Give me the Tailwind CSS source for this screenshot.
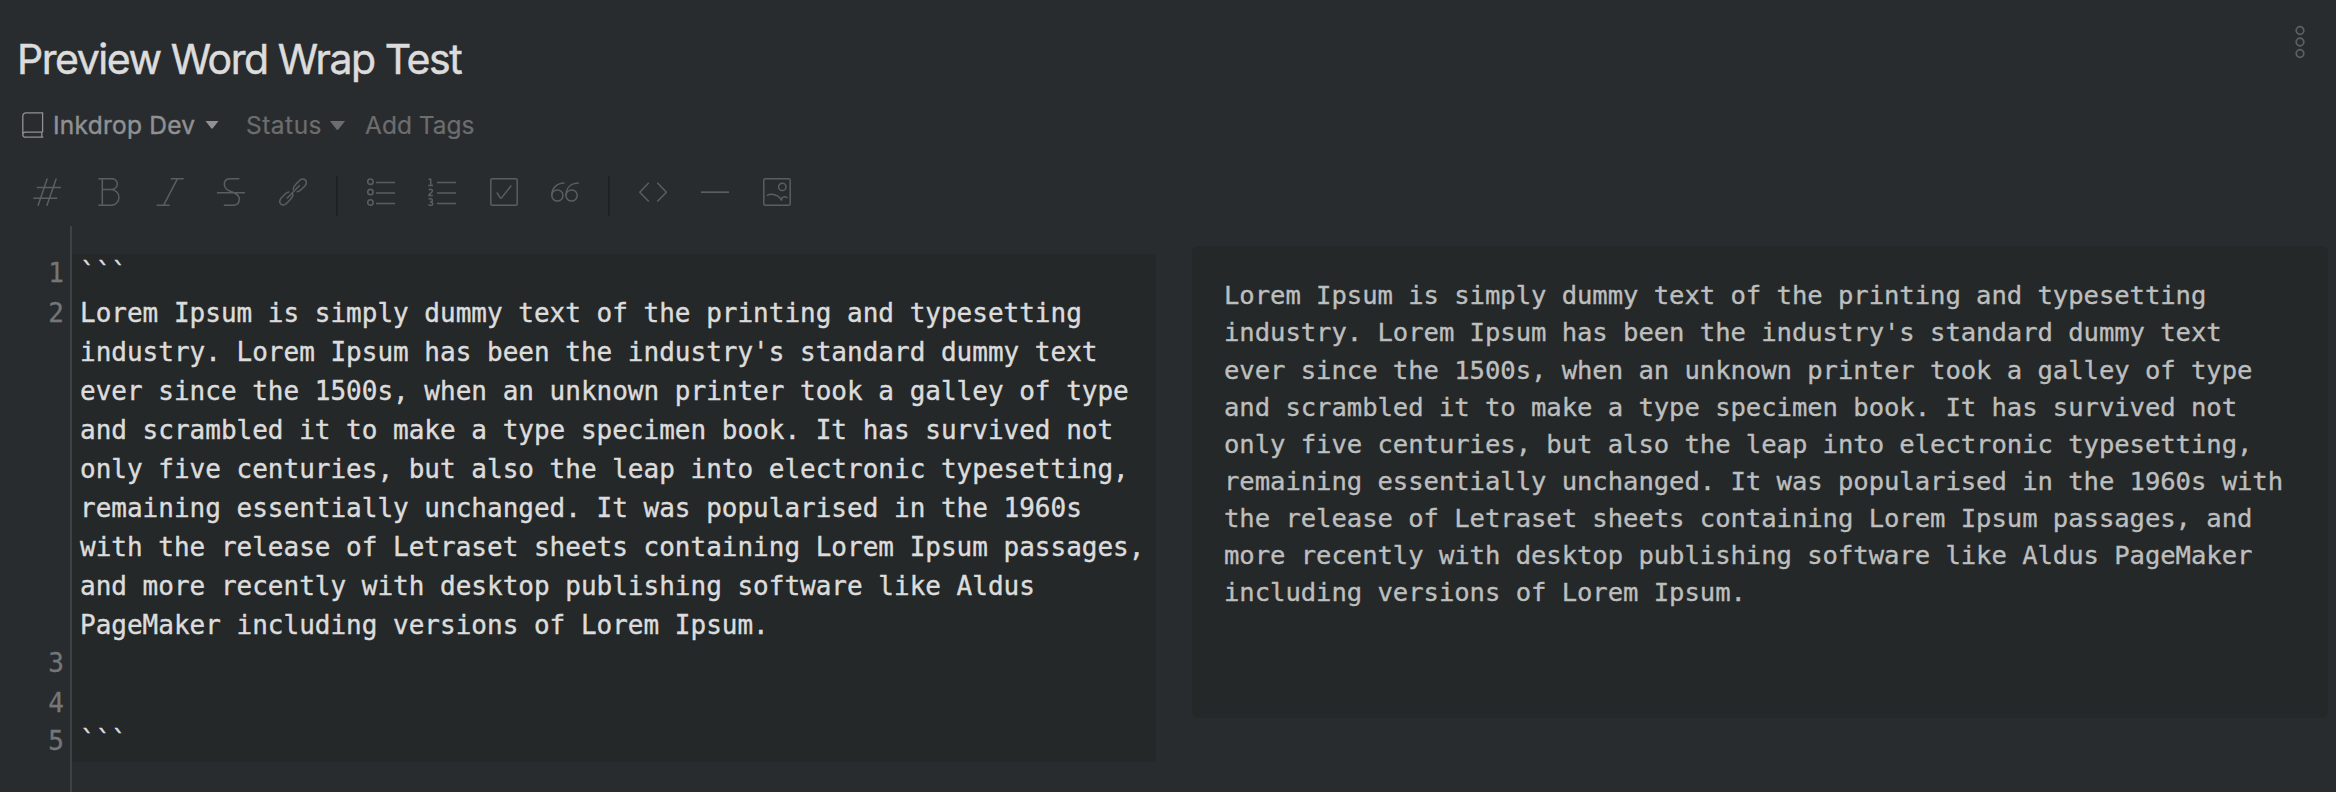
<!DOCTYPE html>
<html lang="en">
<head>
<meta charset="utf-8">
<title>Preview Word Wrap Test</title>
<script src="https://cdn.jsdelivr.net/npm/@tailwindcss/browser@4"></script>
</head>
<body class="flex h-[792px] w-[2336px] flex-col overflow-hidden bg-[#292c2f] font-['Inter',sans-serif]">
  <header class="flex h-[96px] shrink-0 justify-between">
    <h1 class="pt-[35px] pl-[17px] text-[41px] leading-[49px] font-normal tracking-[-1.44px] whitespace-nowrap text-[#dcdcdc] [-webkit-text-stroke:0.5px_#dcdcdc]">Preview Word Wrap Test</h1>
    <svg class="mt-[25px] mr-[31px] h-[34px] w-[10px] text-[#5d6062]" viewBox="0 0 10 34" fill="none" stroke="currentColor" stroke-width="1.7"><circle cx="5" cy="5.5" r="3.8"/><circle cx="5" cy="17" r="3.8"/><circle cx="5" cy="28.5" r="3.8"/></svg>
  </header>

  <div class="flex h-[60px] shrink-0 items-center pb-[2px] pl-[22px] text-[24.5px] leading-[30px] whitespace-nowrap text-[#6c6d6e]">
    <svg class="h-[26px] w-[22px] text-[#909192]" viewBox="0 0 22 26" fill="none" stroke="currentColor" stroke-width="1.3"><path d="M20.6 20.2V.8H4A3.2 3.2 0 0 0 .8 4v18.3M21.3 25.2H3.3a2.4 2.4 0 0 1 0-5H20.6M19.8 20.2v5"/></svg>
    <span class="ml-[9px] w-[142px] tracking-[0.25px] text-[#909192] [-webkit-text-stroke:0.4px_#909192]">Inkdrop Dev</span>
    <svg class="ml-[10px] h-[8px] w-[14px] text-[#909192]" viewBox="0 0 14 8"><path d="M.5 0h13L7.6 7.6h-1.2z" fill="currentColor"/></svg>
    <span class="ml-[27px] w-[76px] tracking-[0.5px] [-webkit-text-stroke:0.2px_#6c6d6e]">Status</span>
    <svg class="ml-[8px] h-[9px] w-[15px]" viewBox="0 0 15 9"><path d="M0 0h15L8.2 8.7H6.8z" fill="currentColor"/></svg>
    <span class="ml-[20px] [-webkit-text-stroke:0.2px_#6c6d6e]">Add Tags</span>
  </div>

  <nav class="flex h-[70px] shrink-0 items-start pt-[20px] pl-[33px] text-[#5b5e60]">
    <div class="flex gap-[33.4px] pt-[2px]">
      <svg class="size-[28px]" viewBox="0 0 28 28" fill="none" stroke="currentColor" stroke-width="1.5"><path d="M3.7 9.5H28M.3 20.3H24.3M14.3.5 5 27.8M23.3.5 13.8 27.8"/></svg>
      <svg class="size-[28px]" viewBox="0 0 28 28" fill="none" stroke="currentColor" stroke-width="1.5"><path d="M4.3.7H18a5.35 5.35 0 0 1 0 10.7H8.3M17 11.4a7.95 7.95 0 0 1 0 15.9H4.3M8.3.7V27.3"/></svg>
      <svg class="size-[28px]" viewBox="0 0 28 28" fill="none" stroke="currentColor" stroke-width="1.5"><path d="M14.7.7H27.7M.7 27.2H13.7M21.5.7 7.7 27.2"/></svg>
      <svg class="size-[28px]" viewBox="0 0 28 28" fill="none" stroke="currentColor" stroke-width="1.5"><path d="M0 14.8H28M22.3.7H13.5C9 .7 7.3 3.5 7.3 6.3C7.3 12.5 14 13 17.5 15C20.5 16.6 22.3 18.3 22.3 21C22.3 25 20 27.3 16 27.3H6.8"/></svg>
      <svg class="size-[28px]" viewBox="0 0 28 28" fill="none" stroke="currentColor" stroke-width="1.5" stroke-linecap="round"><path d="M8.3 20 20.3 7.8M14.3 11.5C14.2 9.8 14.8 8.6 16 7.2L20 3C22 .8 24.6.3 26.3 1.9C28 3.6 27.6 6.2 25.6 8.2L22 11.8C20.8 13 19.8 13.6 18.2 13.7M13.9 16.3C14 18.2 13.4 19.3 12.2 20.6L8 24.9C6 26.9 3.5 27.6 1.8 26C.1 24.4.5 21.8 2.5 19.7L6.2 16C7.3 14.9 8.3 14.2 9.9 14"/></svg>
    </div>
    <div class="ml-[29.4px] h-[40px] w-[2px] bg-[#1f2124]"></div>
    <div class="ml-[29px] flex gap-[33.4px] pt-[2px]">
      <svg class="size-[28px]" viewBox="0 0 28 28" fill="none" stroke="currentColor" stroke-width="1.5"><g stroke-width="1.6"><circle cx="3.4" cy="3.7" r="2.7"/><circle cx="3.4" cy="14.1" r="2.7"/><circle cx="3.4" cy="24.5" r="2.7"/></g><path d="M9 4.5H28M9 15H28M9 25.5H28"/></svg>
      <svg class="size-[28px]" viewBox="0 0 28 28" fill="none" stroke="currentColor" stroke-width="1.5"><path d="M9 4.5H28M9 15H28M9 25.5H28"/><path d="M.5 1.3H2.7V7.5M.2 7.6H5M.8 12.3C1.5 10.8 4.4 11 4.4 13C4.4 14.5 1 15.8.8 17.6H4.8M.8 21.5C1.8 20 4.5 20.5 4.3 22.5C4.2 23.8 3 23.9 2 23.9C3.5 23.9 4.7 24.3 4.7 25.7C4.7 27.9 1.5 28 .5 26.5"/></svg>
      <svg class="size-[28px]" viewBox="0 0 28 28" fill="none" stroke="currentColor" stroke-width="1.5"><rect x=".8" y=".8" width="26.4" height="26.4" rx="1.5"/><path d="M6.8 14.5 10.3 19.8Q11 20.6 11.8 19.6L21.3 7.5"/></svg>
      <svg class="size-[28px]" viewBox="0 0 28 28" fill="none" stroke="currentColor" stroke-width="1.5"><circle cx="6.4" cy="17.5" r="5.6"/><path d="M.8 17.5C.8 9.5 6 5.2 13.5 5.1"/><circle cx="20.6" cy="17.5" r="5.6"/><path d="M15 17.5C15 9.5 20.2 5.2 27.8 5.1"/></svg>
    </div>
    <div class="ml-[29px] h-[40px] w-[2px] bg-[#1f2124]"></div>
    <div class="ml-[29px] flex gap-[34px] pt-[2px]">
      <svg class="size-[28px]" viewBox="0 0 28 28" fill="none" stroke="currentColor" stroke-width="1.5"><path d="M9.8 4.8.8 14.2 9.8 23.5M18.3 4.8 27.4 14.2 18.3 23.5"/></svg>
      <svg class="size-[28px]" viewBox="0 0 28 28" fill="none" stroke="currentColor" stroke-width="1.7"><path d="M0 14.2H28"/></svg>
      <svg class="size-[28px]" viewBox="0 0 28 28" fill="none" stroke="currentColor" stroke-width="1.5"><rect x=".8" y=".8" width="26.4" height="26.4" rx="1.5"/><circle cx="19.3" cy="8.9" r="3.7"/><path d="M3.8 17.7C8.5 14.8 16.5 16.8 18.6 22.8C17.8 19.5 21.5 17.5 24.5 19.8"/></svg>
    </div>
  </nav>

  <main class="flex min-h-0 flex-1 items-start font-['DejaVu_Sans_Mono',monospace]">
    <div class="flex h-full w-[72px] shrink-0 flex-col border-r-2 border-[#3f4244] pt-[28px] pr-[6px] text-right text-[26px] leading-[39px] text-[#757677] [-webkit-text-stroke:0.3px_#757677]">
      <div class="h-[40px]">1</div>
      <div class="h-[350px]">2</div>
      <div class="h-[40px]">3</div>
      <div class="h-[38px]">4</div>
      <div class="h-[39px]">5</div>
    </div>
    <div class="mt-[28px] h-[508px] w-[1084px] shrink-0 bg-[#252829] pl-[8px] text-[26px] leading-[39px] text-[#dcdcdc] [-webkit-text-stroke:0.4px_#dcdcdc]">
      <pre class="h-[40px] font-['DejaVu_Sans_Mono',monospace]">```</pre>
      <pre class="h-[428px] font-['DejaVu_Sans_Mono',monospace]">Lorem Ipsum is simply dummy text of the printing and typesetting
industry. Lorem Ipsum has been the industry's standard dummy text
ever since the 1500s, when an unknown printer took a galley of type
and scrambled it to make a type specimen book. It has survived not
only five centuries, but also the leap into electronic typesetting,
remaining essentially unchanged. It was popularised in the 1960s
with the release of Letraset sheets containing Lorem Ipsum passages,
and more recently with desktop publishing software like Aldus
PageMaker including versions of Lorem Ipsum.</pre>
      <pre class="h-[39px] font-['DejaVu_Sans_Mono',monospace]">```</pre>
    </div>
    <pre class="mt-[20px] ml-[36px] h-[472px] w-[1136px] shrink-0 rounded-[6px] bg-[#252829] pt-[31.4px] pl-[32px] font-['DejaVu_Sans_Mono',monospace] text-[25.6px] leading-[37.1px] tracking-[-0.06px] text-[#bdbebe] [-webkit-text-stroke:0.35px_#bdbebe]">Lorem Ipsum is simply dummy text of the printing and typesetting
industry. Lorem Ipsum has been the industry's standard dummy text
ever since the 1500s, when an unknown printer took a galley of type
and scrambled it to make a type specimen book. It has survived not
only five centuries, but also the leap into electronic typesetting,
remaining essentially unchanged. It was popularised in the 1960s with
the release of Letraset sheets containing Lorem Ipsum passages, and
more recently with desktop publishing software like Aldus PageMaker
including versions of Lorem Ipsum.</pre>
  </main>
</body>
</html>
